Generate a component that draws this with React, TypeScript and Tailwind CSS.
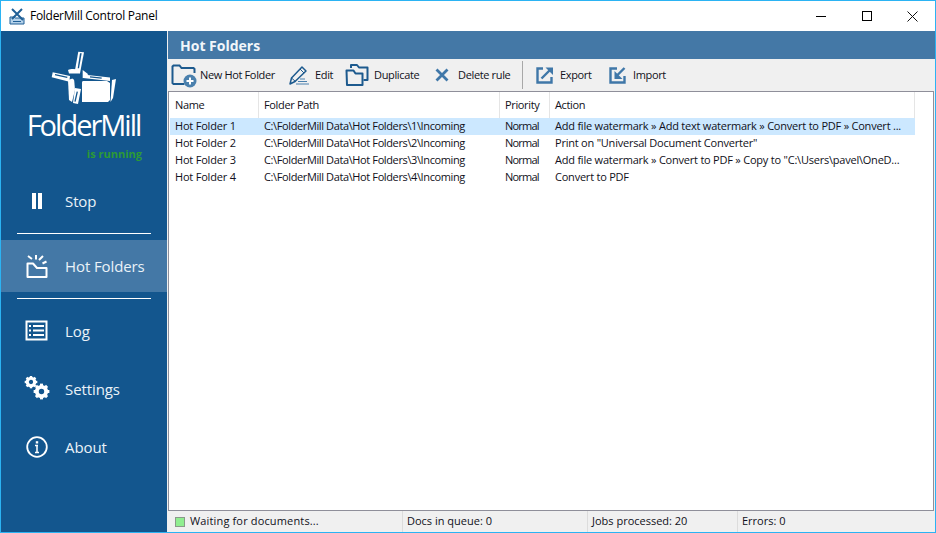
const rows = [
  { name: "Hot Folder 1", path: "C:\\FolderMill Data\\Hot Folders\\1\\Incoming", action: 'Add file watermark » Add text watermark » Convert to PDF » Convert ...', selected: true },
  { name: "Hot Folder 2", path: "C:\\FolderMill Data\\Hot Folders\\2\\Incoming", action: 'Print on "Universal Document Converter"' },
  { name: "Hot Folder 3", path: "C:\\FolderMill Data\\Hot Folders\\3\\Incoming", action: 'Add file watermark » Convert to PDF » Copy to "C:\\Users\\pavel\\OneD...' },
  { name: "Hot Folder 4", path: "C:\\FolderMill Data\\Hot Folders\\4\\Incoming", action: "Convert to PDF" },
];

const AppIcon = () => (
  <svg width="17" height="17" viewBox="0 0 17 17" fill="none">
    <path d="M1 9h4l1 1h9v6H1z" fill="#b5d2ea" stroke="#1f5f96" />
    <path d="M3 1l11 11M13 1L3 11" stroke="#1f5f96" strokeWidth="2" />
    <path d="M4 13.500h8" stroke="#1f5f96" />
  </svg>
);

// coords traced from the reference logo
const MillLogo = () => (
  <svg width="68" height="56" viewBox="0 0 68 56" fill="none">
    <path d="M32 31h25l3 2v17l-2 2H32z" fill="#fff" />
    <path d="M62 30l4-1-3 19-2.500 4z" fill="#fff" />
    <path d="M28.300 1.700l5.700.6-4 21-5-3.300z" fill="#fff" />
    <path d="M30 3.300l1.700 0-2.700 15-1.300 0z" fill="#13568e" />
    <path d="M18 20c3-1.500 8-1 12 0v3.500H19z" fill="#fff" />
    <path d="M2.700 22.300L20 26l-.7 5.700L1.700 27.300z" fill="#fff" />
    <path d="M5 24.700l12.300 2.600" stroke="#13568e" strokeWidth="1.300" />
    <path d="M32.700 20l5.600 4.300-5.600 4z" fill="#fff" />
    <path d="M33 24.500l27 3v3.500l-27-3z" fill="#fff" />
    <path d="M40 26.800l11.700 1.400" stroke="#13568e" strokeWidth="1.300" />
    <path d="M18 30l6-2 1 12-3 12-3-2z" fill="#fff" />
    <path d="M25 38l6 1-3 15-5-1z" fill="#fff" />
    <path d="M27.300 41.700L25 51.700" stroke="#13568e" strokeWidth="1.300" />
    <path d="M21 26l9 9 3-6" stroke="#13568e" strokeWidth="1.200" />
  </svg>
);

const PauseIcon = () => (
  <svg width="24" height="24" viewBox="0 0 24 24" fill="#fff">
    <rect x="7" y="4" width="4" height="16" />
    <rect x="13" y="4" width="4" height="16" />
  </svg>
);

const HotFolderIcon = () => (
  <svg width="24" height="26" viewBox="0 0 24 26" fill="none" stroke="#fff" strokeWidth="2">
    <path d="M2.500 10.500H8l4 4.500h9.500v9H2.500z" strokeLinejoin="round" />
    <path d="M3 3l4 3M11 2v4.500M18 3l-4 4M21.500 8.500l-4 2" />
  </svg>
);

const LogIcon = () => (
  <svg width="24" height="22" viewBox="0 0 24 22" fill="none">
    <rect x="1.500" y="1.500" width="20" height="18" stroke="#fff" strokeWidth="2" />
    <path d="M4 6h2M8 6h11M4 10.500h2M8 10.500h11M4 15h2M8 15h11" stroke="#fff" strokeWidth="2" />
  </svg>
);

const Gear = ({ cx, cy, r }: { cx: number; cy: number; r: number }) => (
  <g>
    <circle cx={cx} cy={cy} r={r * 0.62} fill="none" stroke="#fff" strokeWidth={r * 0.52} />
    {[0, 45, 90, 135, 180, 225, 270, 315].map((a) => (
      <rect key={a} x={cx - r * 0.2} y={cy - r * 1.05} width={r * 0.4} height={r * 0.4} fill="#fff" transform={`rotate(${a} ${cx} ${cy})`} />
    ))}
  </g>
);

const SettingsIcon = () => (
  <svg width="26" height="26" viewBox="0 0 26 26">
    <Gear cx={7} cy={6} r={6} />
    <Gear cx={17.500} cy={15.500} r={7.500} />
  </svg>
);

const InfoIcon = () => (
  <svg width="24" height="24" viewBox="0 0 24 24" fill="none" stroke="#fff">
    <circle cx="12" cy="12" r="9.800" strokeWidth="1.800" />
    <path d="M12 10.500v7M10 10.500h3M10 17.500h4" strokeWidth="1.500" />
    <path d="M12 6.200v2.300" strokeWidth="2.400" />
  </svg>
);

const NewFolderIcon = () => (
  <svg width="26" height="26" viewBox="0 0 26 26" fill="none">
    <path d="M1.500 18V4.500l1-1h6l2 2.500h12l1 1v4" stroke="#1d5a8e" strokeWidth="2" />
    <path d="M1.500 18v3l1 1h11" stroke="#1d5a8e" strokeWidth="2" />
    <circle cx="19" cy="19" r="6.500" fill="#4a80ad" />
    <path d="M19 15.500v7M15.500 19h7" stroke="#fff" strokeWidth="2" />
  </svg>
);

const EditIcon = () => (
  <svg width="22" height="22" viewBox="0 0 22 22" fill="none" stroke="#1d5a8e">
    <path d="M2 20l1.500-6L14 3l4 4L7 17.500z" strokeWidth="1.500" strokeLinejoin="round" />
    <path d="M3.500 14l4 3.500M12 5l4 4" strokeWidth="1" />
    <path d="M12 15h5M10 17.500h9M8 20h13" strokeWidth="1.200" stroke="#4a80ad" />
  </svg>
);

const DuplicateIcon = () => (
  <svg width="24" height="24" viewBox="0 0 24 24" fill="none" stroke="#1d5a8e" strokeWidth="2">
    <path d="M1.500 7.500h7l2 3h7v11.500h-15.500z" strokeLinejoin="round" />
    <path d="M6 5V2h6l2 2.500h8.500V17h-4" strokeLinejoin="round" />
  </svg>
);

const DeleteIcon = () => (
  <svg width="14" height="14" viewBox="0 0 14 14" fill="none" stroke="#3f77a8" strokeWidth="2.800">
    <path d="M1.500 1.500l11 11M12.500 1.500l-11 11" />
  </svg>
);

const ExportIcon = () => (
  <svg width="18" height="18" viewBox="0 0 18 18" fill="none" stroke="#3f77a8">
    <path d="M7 2.500H1.500v14h14V11" strokeWidth="2.400" />
    <path d="M5.500 12.500L14 4" strokeWidth="2.400" />
    <path d="M9.500 1.500h7.500V9z" fill="#3f77a8" stroke="none" />
  </svg>
);

const ImportIcon = () => (
  <svg width="18" height="18" viewBox="0 0 18 18" fill="none" stroke="#3f77a8">
    <path d="M8 2.500H1.500v14h14V10" strokeWidth="2.400" />
    <path d="M15.500 2L8 9.500" strokeWidth="2.400" />
    <path d="M5.500 5v8h8z" fill="#3f77a8" stroke="none" />
  </svg>
);

const NavItem = ({ icon, label, className }: { icon: React.ReactNode; label: string; className: string }) => (
  <div className={`flex items-center ${className}`}>
    <div className="flex w-[64px] justify-center pl-[8px] shrink-0">{icon}</div>
    <span className="text-[15px] tracking-[-0.1px] text-[#eaf2f8]">{label}</span>
  </div>
);

const ToolButton = ({ icon, label, className }: { icon: React.ReactNode; label: string; className: string }) => (
  <div className={`flex items-center ${className}`}>
    {icon}
    <span>{label}</span>
  </div>
);

export default function App() {
  return (
    <div className="w-[936px] h-[533px] overflow-hidden border border-[#2bb3f3] bg-white flex flex-col text-[#101020] font-['Open_Sans','Noto_Sans',sans-serif] text-[11px] tracking-[-0.35px]">
      <div className="h-[30px] flex items-center shrink-0">
        <div className="ml-[8px] mr-[4px]"><AppIcon /></div>
        <span className="text-[12px] tracking-[-0.28px] text-black">FolderMill Control Panel</span>
        <div className="ml-auto flex items-center">
          <div className="w-[46px] flex justify-center"><div className="w-[10px] h-px bg-black" /></div>
          <div className="w-[45px] flex justify-center"><div className="w-[10px] h-[10px] border border-black" /></div>
          <div className="w-[46px] flex justify-center">
            <svg width="11" height="11" viewBox="0 0 11 11" stroke="#111"><path d="M.5.500l10 10M10.500.500l-10 10" /></svg>
          </div>
        </div>
      </div>

      <div className="flex flex-1 min-h-0">
        <aside className="w-[166px] shrink-0 bg-[#13568e] flex flex-col">
          <div className="flex justify-center mt-[19px] pr-[1px]"><MillLogo /></div>
          <div className="mt-[1px] text-center text-white text-[29px] leading-[36px] tracking-[-2px] font-normal pr-[1px]">FolderMill</div>
          <div className="mt-[4px] pr-[25px] text-right text-[#2c9a35] text-[11px] leading-[14px] font-bold tracking-normal">is running</div>
          <NavItem icon={<PauseIcon />} label="Stop" className="h-[30px] mt-[25px]" />
          <div className="h-px bg-white mx-[16px] mt-[17px]" />
          <NavItem icon={<HotFolderIcon />} label="Hot Folders" className="h-[52px] mt-[6px] bg-[#4478a6]" />
          <div className="h-px bg-white mx-[16px] mt-[6px]" />
          <NavItem icon={<LogIcon />} label="Log" className="h-[30px] mt-[17px]" />
          <NavItem icon={<SettingsIcon />} label="Settings" className="h-[30px] mt-[28px]" />
          <NavItem icon={<InfoIcon />} label="About" className="h-[30px] mt-[28px]" />
        </aside>

        <main className="flex-1 min-w-0 flex flex-col bg-[#f0f0f0] pl-px">
          <div className="h-[28px] shrink-0 bg-[#4478a6] flex items-center pl-[12px] text-[14px] font-bold text-[#f2f6fa] tracking-normal">Hot Folders</div>

          <div className="h-[32px] shrink-0 flex items-center pl-[3px]">
            <ToolButton icon={<NewFolderIcon />} label="New Hot Folder" className="gap-[3px] w-[117px]" />
            <ToolButton icon={<EditIcon />} label="Edit" className="gap-[5px] w-[57px]" />
            <ToolButton icon={<DuplicateIcon />} label="Duplicate" className="gap-[5px] w-[90px]" />
            <ToolButton icon={<DeleteIcon />} label="Delete rule" className="gap-[9px] w-[87px]" />
            <div className="w-px h-[28px] bg-[#a8a8a8]" />
            <ToolButton icon={<ExportIcon />} label="Export" className="gap-[6px] w-[73px] ml-[13px]" />
            <ToolButton icon={<ImportIcon />} label="Import" className="gap-[6px]" />
          </div>

          <div className="flex-1 min-h-0 bg-white border border-[#8f8f9a] mr-px">
            <div className="h-[26px] flex items-center">
              <div className="w-[90px] h-full pl-[6px] flex items-center border-r border-[#e5e5e5]">Name</div>
              <div className="w-[241px] h-full pl-[5px] flex items-center border-r border-[#e5e5e5]">Folder Path</div>
              <div className="w-[50px] h-full pl-[5px] flex items-center border-r border-[#e5e5e5]">Priority</div>
              <div className="w-[365px] h-full pl-[5px] flex items-center border-r border-[#e5e5e5]">Action</div>
            </div>
            {rows.map((r) => (
              <div key={r.name} className="h-[17px] flex items-center whitespace-nowrap">
                <div className={`ml-[1px] flex items-center h-full w-[745px] ${r.selected ? "bg-[#cce8ff]" : ""}`}>
                  <div className="w-[89px] pl-[5px] shrink-0 tracking-[-0.2px]">{r.name}</div>
                  <div className="w-[241px] pl-[5px] shrink-0 tracking-[-0.38px]">{r.path}</div>
                  <div className="w-[50px] pl-[5px] shrink-0 tracking-[-0.8px]">Normal</div>
                  <div className="w-[365px] pl-[5px] shrink-0 tracking-[-0.22px]">{r.action}</div>
                </div>
              </div>
            ))}
          </div>

          <div className="h-[21px] shrink-0 flex items-center">
            <div className="w-[235px] h-full flex items-center pl-[7px] border-r border-[#dcdcdc] tracking-[0.15px]">
              <div className="w-[10px] h-[10px] bg-[#90ee90] border border-[#8a9a8a] mr-[5px]" />
              Waiting for documents...
            </div>
            <div className="w-[185px] h-full flex items-center pl-[4px] border-r border-[#dcdcdc] tracking-normal">Docs in queue: 0</div>
            <div className="w-[150px] h-full flex items-center pl-[4px] border-r border-[#dcdcdc] tracking-normal">Jobs processed: 20</div>
            <div className="h-full flex items-center pl-[4px] tracking-normal">Errors: 0</div>
          </div>
        </main>
      </div>
    </div>
  );
}
